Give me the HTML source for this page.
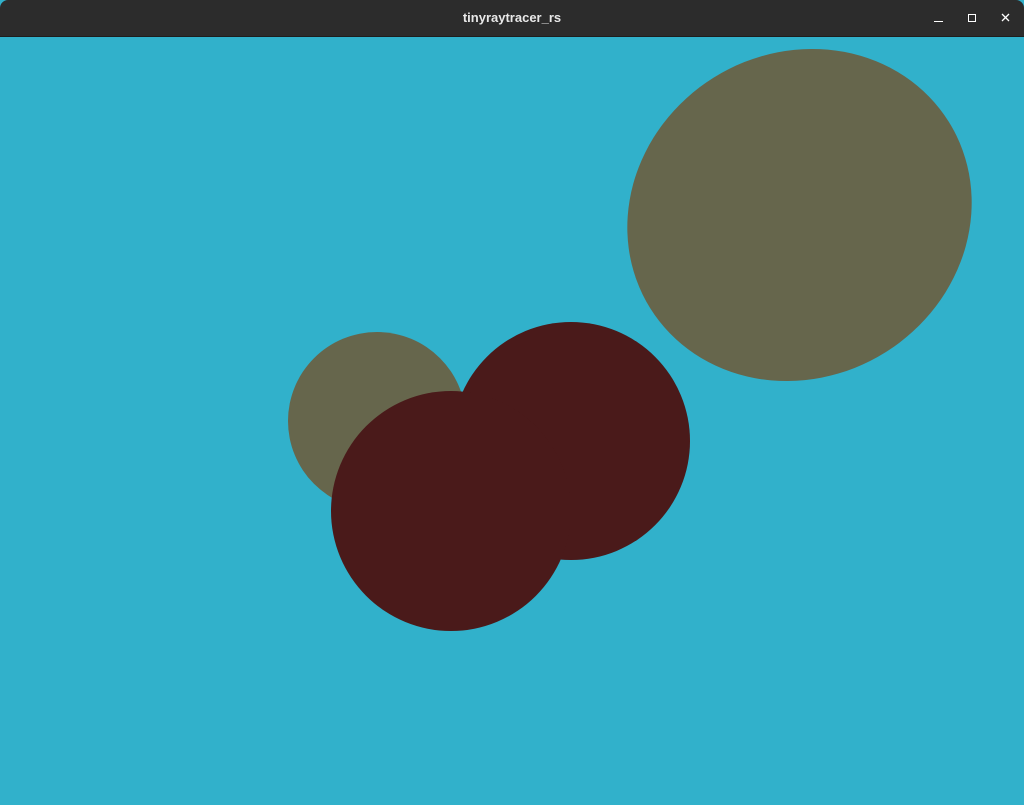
<!DOCTYPE html>
<html><head><style>
html,body{margin:0;padding:0;width:1024px;height:805px;overflow:hidden;background:#31b1cb}
.bar{position:absolute;left:0;top:0;width:1024px;height:36px;background:#2c2c2c;border-bottom:1px solid #1e1e1e;border-radius:8px 8px 0 0}
.t{position:absolute;left:0;width:1024px;top:10px;text-align:center;color:#e8e8e8;font:bold 13px "Liberation Sans",sans-serif}
svg{position:absolute;left:0;top:0}
</style></head><body>
<svg width="1024" height="805">
<rect x="0" y="37" width="1024" height="768" fill="#31b1cb"/>
<ellipse cx="799.5" cy="215" rx="176" ry="162" transform="rotate(-32 799.5 215)" fill="#66664c"/>
<circle cx="377" cy="421" r="89" fill="#66664c"/>
<circle cx="571" cy="441" r="119" fill="#4a1a1a"/>
<circle cx="451" cy="511" r="120" fill="#4a1a1a"/>
</svg>
<div class="bar"></div>
<div class="t">tinyraytracer_rs</div>
<svg width="1024" height="37">
<line x1="934" y1="21.5" x2="943" y2="21.5" stroke="#fff" stroke-width="1"/>
<rect x="968.5" y="14.5" width="7" height="7" fill="none" stroke="#fff" stroke-width="1"/>
<path d="M1002 14 L1009 21 M1009 14 L1002 21" stroke="#fff" stroke-width="1.3"/>
</svg>
</body></html>
